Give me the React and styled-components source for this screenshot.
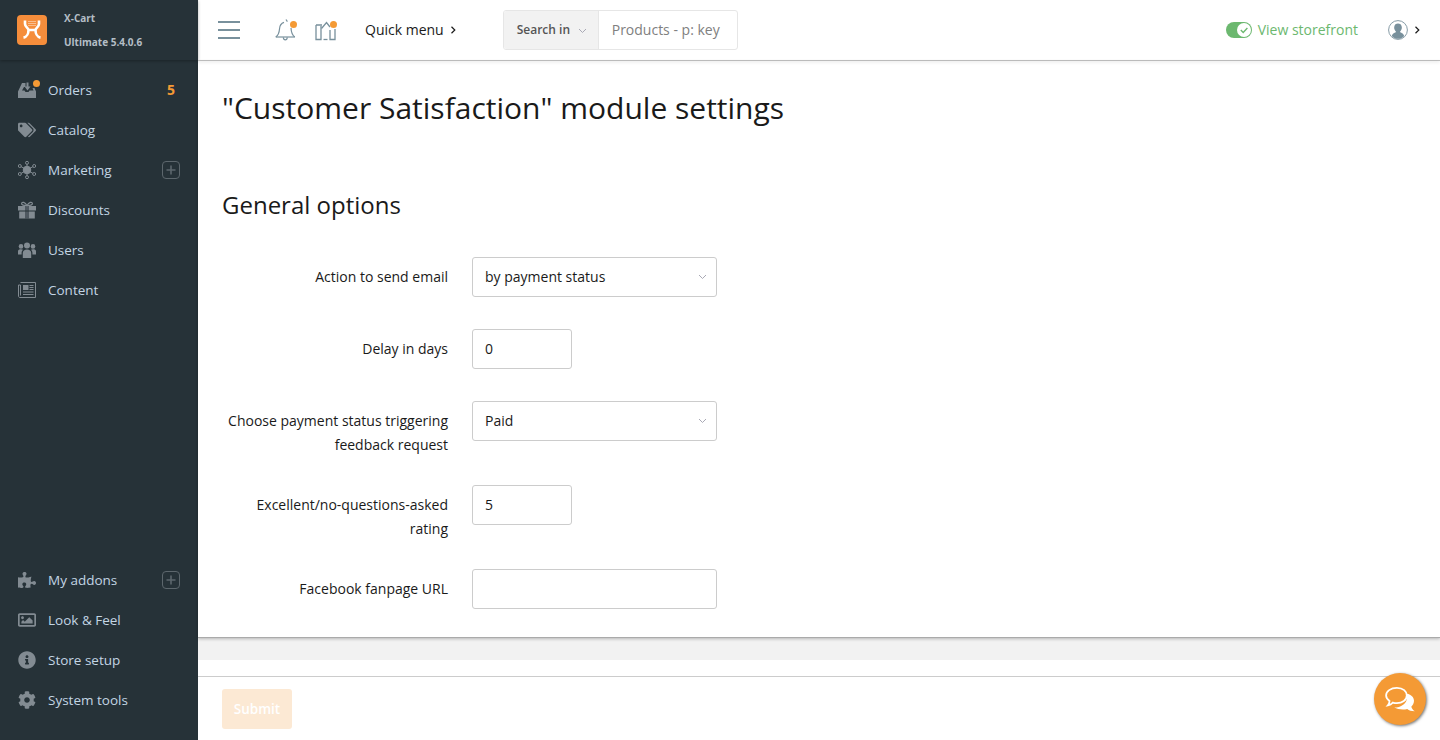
import React from 'react';
import styled, { createGlobalStyle } from 'styled-components';
import {
  FaTags, FaPuzzlePiece, FaRegImage, FaInfoCircle, FaCog,
} from 'react-icons/fa';

const GlobalStyle = createGlobalStyle`
  html, body { margin: 0; padding: 0; height: 100%; }
  body { font-family: "Open Sans", "Liberation Sans", sans-serif; color: #1a1a1a; background: #fff; }
  * { box-sizing: border-box; }
`;

const Page = styled.div`
  display: flex;
  height: 740px;
  overflow: hidden;
  position: relative;
`;

const Sidebar = styled.aside`
  width: 198px;
  flex: none;
  background: #263238;
  display: flex;
  flex-direction: column;
`;

const Brand = styled.div`
  height: 60px;
  flex: none;
  display: flex;
  align-items: center;
  padding-left: 17px;
  box-shadow: 0 1px 3px rgba(0, 0, 0, 0.3);
`;

const BrandText = styled.div`
  margin-left: 17px;
  font-size: 10px;
  font-weight: 700;
  line-height: 24px;
  color: #b4bec6;
`;

const Nav = styled.nav`
  flex: 1;
  display: flex;
  flex-direction: column;
  justify-content: space-between;
  padding: 10px 0 20px;
`;

const NavRow = styled.div`
  height: 40px;
  display: flex;
  align-items: center;
  padding-left: 18px;
  padding-bottom: 1px;
  font-size: 13.5px;
  color: #c3d5e4;
  position: relative;
`;

const NavIcon = styled.span`
  width: 18px;
  height: 18px;
  margin-right: 12px;
  margin-top: 1px;
  display: flex;
  align-items: center;
  justify-content: center;
  color: #828b92;
  font-size: 18px;
  position: relative;
`;

const OrangeDot = styled.span`
  position: absolute;
  top: ${(p) => p.$top}px;
  right: ${(p) => p.$right}px;
  width: 7px;
  height: 7px;
  border-radius: 50%;
  background: #f49a35;
`;

const Count = styled.span`
  margin-left: auto;
  margin-right: 23px;
  color: #f49a35;
  font-weight: 700;
  font-size: 14px;
`;

const PlusBox = styled.span`
  margin-left: auto;
  margin-right: 18px;
  width: 18px;
  height: 18px;
  margin-top: 1px;
  border: 1px solid #5d676d;
  border-radius: 4px;
  display: flex;
  align-items: center;
  justify-content: center;
`;

const Main = styled.div`
  flex: 1;
  min-width: 0;
  display: flex;
  flex-direction: column;
`;

const Header = styled.header`
  height: 61px;
  flex: none;
  display: flex;
  align-items: center;
  padding: 0 19px 1px 20px;
  border-bottom: 1px solid #c4c4c4;
  box-shadow: 0 2px 3px rgba(0, 0, 0, 0.06);
`;

const Burger = styled.div`
  width: 22px;
  display: flex;
  flex-direction: column;
  gap: 6px;
  margin-right: 35px;
  span { display: block; height: 2px; background: #78909c; }
`;

const HeadIcon = styled.span`
  display: flex;
  position: relative;
  margin-right: ${(p) => p.$gap}px;
`;

const QuickMenu = styled.div`
  display: flex;
  align-items: center;
  gap: 5px;
  font-size: 14px;
  color: #1a1a1a;
  margin-right: 46px;
`;

const Search = styled.div`
  width: 235px;
  height: 40px;
  display: flex;
  border: 1px solid #e6e6e6;
  border-radius: 3px;
  overflow: hidden;
`;

const SearchIn = styled.div`
  width: 95px;
  display: flex;
  align-items: center;
  gap: 8px;
  padding-left: 13px;
  background: #f2f2f2;
  border-right: 1px solid #e6e6e6;
  font-size: 12px;
  font-weight: 600;
  color: #555;
`;

const SearchHint = styled.div`
  display: flex;
  align-items: center;
  padding-left: 13px;
  font-size: 14px;
  color: #808080;
`;

const Storefront = styled.div`
  margin-left: auto;
  display: flex;
  align-items: center;
  gap: 6px;
  font-size: 14px;
  color: #6cb86f;
  margin-right: 30px;
`;

const Toggle = styled.span`
  width: 26px;
  height: 16px;
  border-radius: 8px;
  background: #6cb86f;
  display: flex;
  align-items: center;
  justify-content: flex-end;
  padding-right: 1px;
`;

const Account = styled.div`
  display: flex;
  align-items: center;
  gap: 5px;
`;

const Content = styled.main`
  flex: 1;
  padding: 25px 24px 0;
  border-bottom: 1px solid #aaa;
  box-shadow: 0 1px 3px rgba(0, 0, 0, 0.25);
  position: relative;
`;

const Title = styled.h1`
  margin: 0;
  font-size: 30px;
  font-weight: 400;
  line-height: 44px;
`;

const Section = styled.h2`
  margin: 53px 0 0;
  font-size: 24px;
  font-weight: 400;
  line-height: 44px;
`;

const Form = styled.div`
  margin-top: 30px;
  display: flex;
  flex-direction: column;
  gap: 32px;
`;

const Row = styled.div`
  display: flex;
  align-items: flex-start;
  min-height: 40px;
`;

const Label = styled.label`
  width: 226px;
  margin-right: 24px;
  padding-top: 8px;
  margin-bottom: -4px;
  font-size: 14px;
  line-height: 24px;
  text-align: right;
  color: #1a1a1a;
`;

const Field = styled.div`
  width: ${(p) => p.$width}px;
  height: 40px;
  display: flex;
  align-items: center;
  justify-content: space-between;
  padding: 0 9px 2px 12px;
  border: 1px solid #ccc;
  border-radius: 3px;
  font-size: 14px;
  color: #1a1a1a;
`;

const Band = styled.div`
  height: 22px;
  flex: none;
  background: #f2f2f2;
`;

const Spacer = styled.div`
  height: 16px;
  flex: none;
`;

const Footer = styled.footer`
  height: 64px;
  flex: none;
  border-top: 1px solid #ccc;
  padding: 12px 24px;
`;

const Submit = styled.button`
  width: 70px;
  height: 40px;
  border: none;
  border-radius: 3px;
  background: #fce9d4;
  color: #fff;
  font-family: inherit;
  font-size: 13.5px;
  font-weight: 600;
  padding: 0;
`;

const ChatBubble = styled.div`
  position: absolute;
  left: 1374px;
  top: 673px;
  width: 52px;
  height: 52px;
  border-radius: 50%;
  background: #f49a35;
  box-shadow: 1px 1px 3px rgba(0, 0, 0, 0.55);
  display: flex;
  align-items: center;
  justify-content: center;
`;

const CaretSvg = styled.svg`
  margin-top: 2px;
  flex: none;
`;

const Chevron = ({ color = '#1a1a1a', size = 8 }) => (
  <svg width={size} height={size} viewBox="0 0 8 8" fill="none" stroke={color} strokeWidth="1.2">
    <path d="M2.5 0.8 L5.8 4 L2.5 7.2" />
  </svg>
);

const Caret = () => (
  <CaretSvg width="9" height="6" viewBox="0 0 9 6" fill="none" stroke="#a9a9b5" strokeWidth="1">
    <path d="M1 1 L4.5 4.5 L8 1" />
  </CaretSvg>
);

const Plus = () => (
  <svg width="10" height="10" viewBox="0 0 10 10" stroke="#5d676d" strokeWidth="1.6">
    <path d="M5 0.5 V9.5 M0.5 5 H9.5" />
  </svg>
);

const LogoMark = () => (
  <svg width="30" height="30" viewBox="0 0 30 30">
    <rect width="30" height="30" rx="4" fill="#f58d3b" />
    <path
      d="M8 5.5 V9 C8 12 11.5 13 11.5 15 C11.5 18 10 22 6.5 22.6 M22 5.5 V9 C22 12 18.5 13 18.5 15 C18.5 18 20 22 23.5 22.6 M11.5 15 H18.5"
      fill="none"
      stroke="#fff"
      strokeWidth="2.6"
    />
    <path
      d="M11.5 6h1v1h-1zM13.5 6h1v1h-1zM15.5 6h1v1h-1zM17.5 6h1v1h-1zM11.5 8h1v1h-1zM13.5 8h1v1h-1zM15.5 8h1v1h-1zM17.5 8h1v1h-1zM11.5 10h1v1h-1zM13.5 10h1v1h-1zM15.5 10h1v1h-1zM17.5 10h1v1h-1z"
      fill="#fff"
      opacity="0.85"
    />
  </svg>
);

const OrdersIcon = () => (
  <svg width="18" height="18" viewBox="0 0 18 18" fill="#828b92">
    <path d="M0 10.5 L4 2 H7.5 V6 H6 L4 9.5 H6.5 L7.5 11 H10.5 L11.5 9.5 H15.5 L14.5 7 H16.5 L18 10.5 V17 H0 Z" />
    <path d="M8.5 1.5 H10.5 V5.5 H12.5 L9.5 9.5 L6.5 5.5 H8.5 Z" />
  </svg>
);

const MarketingIcon = () => (
  <svg width="18" height="18" viewBox="0 0 18 18" fill="none" stroke="#828b92" strokeWidth="1">
    <path d="M9 9 V2 M9 9 V16 M9 9 L2 5 M9 9 L16 5 M9 9 L2 13 M9 9 L16 13" />
    <circle cx="9" cy="9" r="3.8" fill="#828b92" />
    <circle cx="9" cy="1.8" r="1.5" fill="#263238" />
    <circle cx="9" cy="16.2" r="1.5" fill="#263238" />
    <circle cx="1.8" cy="5" r="1.5" fill="#263238" />
    <circle cx="16.2" cy="5" r="1.5" fill="#263238" />
    <circle cx="1.8" cy="13" r="1.5" fill="#263238" />
    <circle cx="16.2" cy="13" r="1.5" fill="#263238" />
  </svg>
);

const GiftIcon = () => (
  <svg width="18" height="18" viewBox="0 0 18 18" fill="#828b92">
    <path d="M0 5 H18 V9.5 H0 Z M1.2 10.5 H16.8 V17.5 H1.2 Z" />
    <path d="M7 5 H11 V17.5 H7 Z" fill="#263238" opacity="0.55" />
    <path d="M9 4.5 C7 1 4 0.5 3.6 2.4 C3.3 4 6 4.6 9 4.5 C12 4.6 14.7 4 14.4 2.4 C14 0.5 11 1 9 4.5 Z" fill="none" stroke="#828b92" strokeWidth="1.2" />
  </svg>
);

const UsersIcon = () => (
  <svg width="18" height="18" viewBox="0 0 18 18" fill="#828b92">
    <circle cx="9" cy="4.6" r="3" />
    <circle cx="3" cy="5.4" r="2.3" />
    <circle cx="15" cy="5.4" r="2.3" />
    <path d="M4.8 17 V12 C4.8 9.6 6.6 8.4 9 8.4 C11.4 8.4 13.2 9.6 13.2 12 V17 Z" />
    <path d="M0 13.5 V10.2 C0 8.8 1.3 8.2 3 8.2 C3.8 8.2 4.6 8.4 5 8.8 C4 9.6 3.6 10.6 3.6 12 V13.5 Z" />
    <path d="M18 13.5 V10.2 C18 8.8 16.7 8.2 15 8.2 C14.2 8.2 13.4 8.4 13 8.8 C14 9.6 14.4 10.6 14.4 12 V13.5 Z" />
  </svg>
);

const NewsIcon = () => (
  <svg width="18" height="18" viewBox="0 0 18 18" fill="none" stroke="#828b92" strokeWidth="1">
    <path d="M2.5 1.5 H17.5 V16.5 H2 C1 16.5 0.5 16 0.5 15 V4 H2.5 V14.5" />
    <path d="M5 4 H10.5 V9 H5 Z" fill="#828b92" stroke="none" />
    <path d="M11.5 4.5 H15.5 M11.5 6.5 H15.5 M11.5 8.5 H15.5 M5 11 H15.5 M5 13.5 H15.5" />
  </svg>
);

const BellIcon = () => (
  <svg width="22" height="22" viewBox="0 0 22 22" fill="none" stroke="#78909c" strokeWidth="1.2">
    <path d="M0.8 18 C3.5 16 4.3 13 4.5 10 C4.7 6.5 6.5 4.2 9 3.4" />
    <path d="M16 9 C16.2 13 17 16 19.8 18" />
    <path d="M0.8 18 H19.8" />
    <path d="M8.3 18.4 C8.6 21.6 12 21.6 12.3 18.4" />
    <path d="M11 0.5 L12.4 2.6" />
  </svg>
);

const ModulesIcon = () => (
  <svg width="22" height="22" viewBox="0 0 22 22" fill="none" stroke="#78909c" strokeWidth="1.3">
    <path d="M1 6 V20.5 H6 V7 M1 6 H7" />
    <path d="M6.5 9.5 L11.5 3.5 L15 8" />
    <path d="M8.5 20.5 H12.5" />
    <path d="M15 11 V20.5 H20 V10" />
  </svg>
);

const UserIcon = () => (
  <svg width="20" height="20" viewBox="0 0 20 20">
    <circle cx="10" cy="10" r="9.4" fill="#fff" stroke="#78909c" strokeWidth="0.9" />
    <path d="M3.8 16 C4.5 13 7.5 13 8 11.8 C6.5 10 6 8.5 6.2 7 C6.5 4.5 8 3.5 10 3.5 C12 3.5 13.5 4.5 13.8 7 C14 8.5 13.5 10 12 11.8 C12.5 13 15.5 13 16.2 16 C14.5 18 12 18.8 10 18.8 C8 18.8 5.5 18 3.8 16 Z" fill="#78909c" />
  </svg>
);

const ChatIcon = () => (
  <svg width="33" height="27" viewBox="0 0 36 30">
    <path d="M22 8 C29 8.5 33 12 33 16.5 C33 19.5 31.5 21.5 30 23 C30.5 25 32 27 34 28 C30 28 27.5 27 25.5 25.5 C21 26.8 15 26 11 24 C18 24 26 20 25 12 C24.8 10.5 23.5 9 22 8 Z" fill="#fff" />
    <path d="M14 2 C21 2 25 6 25 10.5 C25 15.5 20 19 14 19 C12.5 19 11 18.8 9.5 18.4 C8 20 6.5 21 4 21.5 C5.3 20 5.8 18.5 5.8 16.6 C3.5 15 2 13 2 10.5 C2 6 7 2 14 2 Z" fill="#f49a35" stroke="#fff" strokeWidth="2" />
  </svg>
);

const topNav = [
  { label: 'Orders', icon: <OrdersIcon />, dot: true, count: 5 },
  { label: 'Catalog', icon: <FaTags /> },
  { label: 'Marketing', icon: <MarketingIcon />, plus: true },
  { label: 'Discounts', icon: <GiftIcon /> },
  { label: 'Users', icon: <UsersIcon /> },
  { label: 'Content', icon: <NewsIcon /> },
];

const bottomNav = [
  { label: 'My addons', icon: <FaPuzzlePiece />, plus: true },
  { label: 'Look & Feel', icon: <FaRegImage /> },
  { label: 'Store setup', icon: <FaInfoCircle /> },
  { label: 'System tools', icon: <FaCog /> },
];

const NavItem = ({ item }) => (
  <NavRow>
    <NavIcon>
      {item.icon}
      {item.dot && <OrangeDot $top={-1} $right={-4} />}
    </NavIcon>
    {item.label}
    {item.count && <Count>{item.count}</Count>}
    {item.plus && <PlusBox><Plus /></PlusBox>}
  </NavRow>
);

const App = () => (
  <Page>
    <GlobalStyle />
    <Sidebar>
      <Brand>
        <LogoMark />
        <BrandText>
          <div>X-Cart</div>
          <div>Ultimate 5.4.0.6</div>
        </BrandText>
      </Brand>
      <Nav>
        <div>{topNav.map((item) => <NavItem key={item.label} item={item} />)}</div>
        <div>{bottomNav.map((item) => <NavItem key={item.label} item={item} />)}</div>
      </Nav>
    </Sidebar>
    <Main>
      <Header>
        <Burger><span /><span /><span /></Burger>
        <HeadIcon $gap={18}>
          <BellIcon />
          <OrangeDot $top={2} $right={0} />
        </HeadIcon>
        <HeadIcon $gap={28}>
          <ModulesIcon />
          <OrangeDot $top={2} $right={0} />
        </HeadIcon>
        <QuickMenu>Quick menu <Chevron /></QuickMenu>
        <Search>
          <SearchIn>Search in <Caret /></SearchIn>
          <SearchHint>Products - p: key</SearchHint>
        </Search>
        <Storefront>
          <Toggle>
            <svg width="14" height="14" viewBox="0 0 14 14">
              <circle cx="7" cy="7" r="7" fill="#fff" />
              <path d="M3.8 7 L6.2 9.4 L10.4 5" fill="none" stroke="#6cb86f" strokeWidth="1.4" />
            </svg>
          </Toggle>
          View storefront
        </Storefront>
        <Account><UserIcon /><Chevron /></Account>
      </Header>
      <Content>
        <Title>"Customer Satisfaction" module settings</Title>
        <Section>General options</Section>
        <Form>
          <Row>
            <Label>Action to send email</Label>
            <Field $width={245}>by payment status <Caret /></Field>
          </Row>
          <Row>
            <Label>Delay in days</Label>
            <Field $width={100}>0</Field>
          </Row>
          <Row>
            <Label>Choose payment status triggering feedback request</Label>
            <Field $width={245}>Paid <Caret /></Field>
          </Row>
          <Row>
            <Label>Excellent/no-questions-asked rating</Label>
            <Field $width={100}>5</Field>
          </Row>
          <Row>
            <Label>Facebook fanpage URL</Label>
            <Field $width={245} />
          </Row>
        </Form>
      </Content>
      <Band />
      <Spacer />
      <Footer>
        <Submit>Submit</Submit>
      </Footer>
    </Main>
    <ChatBubble><ChatIcon /></ChatBubble>
  </Page>
);

export default App;
